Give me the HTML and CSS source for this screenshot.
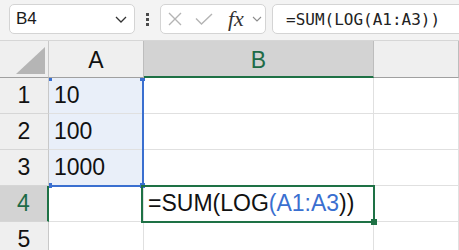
FILE: index.html
```html
<!DOCTYPE html>
<html lang="en">
<head>
    <meta charset="UTF-8">
    <title>Sheet</title>
    <link rel="stylesheet" href="styles.css">
</head>
<body>
    <div class="toolbar">
        <div class="namebox">
            <span>B4</span>
            <svg width="12" height="7" viewBox="0 0 12 7"><path d="M1 1 L6 6 L11 1" fill="none" stroke="#333" stroke-width="1.3"/></svg>
        </div>
        <div class="grip"><i></i><i></i><i></i></div>
        <div class="fbuttons">
            <svg class="icon-x" width="14" height="14" viewBox="0 0 14 14"><path d="M1 1 L13 13 M13 1 L1 13" fill="none" stroke="#b4b4b4" stroke-width="1.4"/></svg>
            <svg class="icon-check" width="18" height="12" viewBox="0 0 18 12"><path d="M1 5.5 L6.5 11 L17 1" fill="none" stroke="#b4b4b4" stroke-width="1.4"/></svg>
            <span class="fx">fx</span>
            <svg class="icon-more" width="10" height="6" viewBox="0 0 10 6"><path d="M1 1 L5 5 L9 1" fill="none" stroke="#8c8c8c" stroke-width="1.1"/></svg>
        </div>
        <div class="formula">=SUM(LOG(A1:A3))</div>
    </div>

    <div class="sheet">
        <div class="corner"><div class="triangle"></div></div>
        <div class="colhead">A</div>
        <div class="colhead active">B</div>
        <div class="colhead"></div>

        <div class="rowhead">1</div>
        <div class="cell ref">10</div>
        <div class="cell"></div>
        <div class="cell"></div>

        <div class="rowhead">2</div>
        <div class="cell ref">100</div>
        <div class="cell"></div>
        <div class="cell"></div>

        <div class="rowhead">3</div>
        <div class="cell ref">1000</div>
        <div class="cell"></div>
        <div class="cell"></div>

        <div class="rowhead active">4</div>
        <div class="cell"></div>
        <div class="cell editing">=SUM(LOG<span class="range">(A1:A3</span>))</div>
        <div class="cell"></div>

        <div class="rowhead">5</div>
        <div class="cell"></div>
        <div class="cell"></div>
        <div class="cell"></div>

        <!-- range highlight for A1:A3 -->
        <div class="range-box">
            <span class="handle tl"></span>
            <span class="handle tr"></span>
            <span class="handle bl"></span>
            <span class="handle br"></span>
        </div>
        <!-- active cell B4 -->
        <div class="active-box"><span class="fill-handle"></span></div>
    </div>
</body>
</html>
```

FILE: styles.css
```css
body {
    margin: 0;
    padding: 0;
    width: 459px;
    height: 250px;
    overflow: hidden;
    background: #fff;
    font-family: "Liberation Sans", Arial, sans-serif;
}
.toolbar {
    display: flex;
    align-items: flex-start;
    box-sizing: border-box;
    height: 41px;
    padding: 4px 0 0 9px;
    background: #f3f3f3;
    border-bottom: 1px solid #d6d6d6;
}
.namebox {
    box-sizing: border-box;
    width: 126px;
    height: 30px;
    display: flex;
    align-items: center;
    justify-content: space-between;
    padding: 0 7px 0 6px;
    background: #fff;
    border: 1px solid #d4d4d4;
    border-radius: 5px;
    font-size: 17px;
    color: #1a1a1a;
}
.grip {
    width: 25px;
    display: flex;
    flex-direction: column;
    align-items: center;
    gap: 2px;
    padding-top: 9px;
}
.grip i {
    display: block;
    width: 3px;
    height: 3px;
    background: #4a4a4a;
}
.fbuttons {
    box-sizing: border-box;
    width: 106px;
    height: 30px;
    display: flex;
    align-items: center;
    padding-left: 7px;
    background: #fff;
    border: 1px solid #d4d4d4;
    border-radius: 5px;
}
.icon-check {
    margin-left: 13px;
}
.fx {
    margin-left: 15px;
    font-family: "Liberation Serif", serif;
    font-style: italic;
    font-size: 22px;
    color: #333;
    line-height: 1;
}
.icon-more {
    margin-left: 8px;
}
.formula {
    box-sizing: border-box;
    flex: 1;
    margin-left: 6px;
    margin-right: -20px;
    height: 30px;
    display: flex;
    align-items: center;
    padding-left: 13px;
    background: #fff;
    border: 1px solid #d4d4d4;
    border-radius: 5px;
    font-family: "DejaVu Sans Mono", monospace;
    font-size: 16px;
    color: #222;
}
.sheet {
    position: relative;
    display: grid;
    grid-template-columns: 49px 95px 230px 1fr;
    grid-template-rows: 37px repeat(5, 36px);
    font-size: 23px;
    color: #111;
}
.sheet > div {
    box-sizing: border-box;
}
.corner {
    background: #efefef;
    border-right: 1px solid #c8c8c8;
    border-bottom: 1px solid #a0a0a0;
    display: flex;
    justify-content: flex-end;
    align-items: flex-end;
    padding: 0 3px 3px 0;
}
.triangle {
    width: 29px;
    height: 27px;
    background: #b5b5b5;
    clip-path: polygon(100% 0, 100% 100%, 0 100%);
}
.colhead {
    background: #efefef;
    border-right: 1px solid #bdbdbd;
    border-bottom: 1px solid #a0a0a0;
    display: flex;
    align-items: center;
    justify-content: center;
    padding-top: 3px;
}
.colhead.active {
    background: #d3d3d3;
    border-bottom: 2px solid #1e7145;
    color: #1e6b47;
}
.rowhead {
    background: #efefef;
    border-right: 1px solid #c8c8c8;
    border-bottom: 1px solid #d6d6d6;
    display: flex;
    align-items: center;
    justify-content: center;
}
.rowhead.active {
    background: #d3d3d3;
    border-right: 2px solid #1e7145;
    color: #1e6b47;
}
.cell {
    background: #fff;
    border-right: 1px solid #e0e0e0;
    border-bottom: 1px solid #e0e0e0;
    display: flex;
    align-items: center;
    padding-left: 5px;
    white-space: nowrap;
}
.cell.ref {
    background: #e9eff9;
}
.cell.editing {
    padding-left: 4px;
}
.range {
    color: #3a6fd0;
}
.range-box {
    position: absolute;
    left: 49px;
    top: 37px;
    width: 95px;
    height: 109px;
    box-sizing: border-box;
    border-right: 2px solid #3a6fd0;
    border-bottom: 2px solid #3a6fd0;
}
.handle {
    position: absolute;
    width: 5px;
    height: 5px;
    background: #3a6fd0;
}
.handle.tl { left: 0; top: 0; height: 3px; width: 3px; }
.handle.tr { right: -3px; top: 0; height: 3px; }
.handle.bl { left: 0; bottom: -3px; width: 3px; }
.handle.br { right: -3px; bottom: -3px; }
.active-box {
    position: absolute;
    left: 141px;
    top: 144px;
    width: 234px;
    height: 38px;
    box-sizing: border-box;
    border: 2px solid #1e7145;
}
.fill-handle {
    position: absolute;
    right: -4px;
    bottom: -4px;
    width: 6px;
    height: 6px;
    background: #1e7145;
}
```
